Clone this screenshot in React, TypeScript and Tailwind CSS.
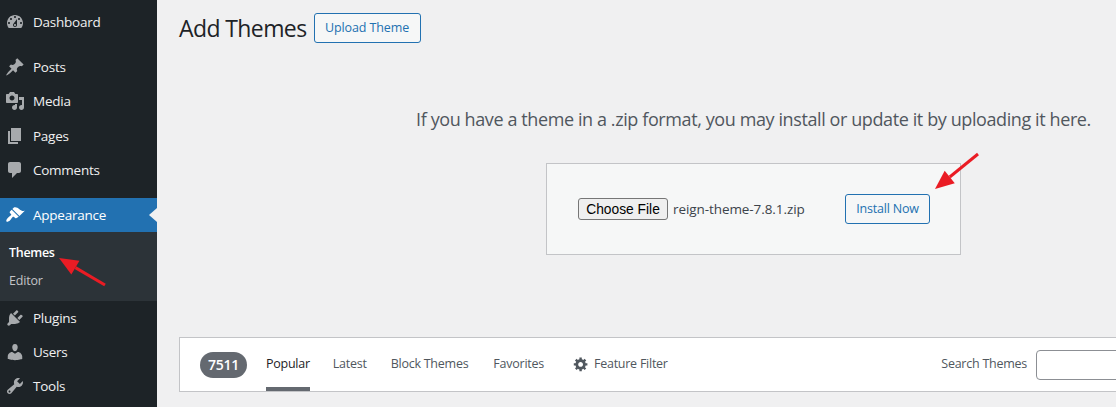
const font = { fontFamily: '"Open Sans", "Noto Sans", sans-serif' };

const P: Record<string, string> = {
  dashboard: "M3.76 16h12.48c1.1-1.37 1.76-3.11 1.76-5 0-4.42-3.58-8-8-8s-8 3.58-8 8c0 1.89.66 3.63 1.76 5zM10 4c.55 0 1 .45 1 1s-.45 1-1 1-1-.45-1-1 .45-1 1-1zM6 6c.55 0 1 .45 1 1s-.45 1-1 1-1-.45-1-1 .45-1 1-1zm8 0c.55 0 1 .45 1 1s-.45 1-1 1-1-.45-1-1 .45-1 1-1zm-5.37 5.55L12 7v6c0 1.1-.9 2-2 2s-2-.9-2-2c0-.57.24-1.08.63-1.45zM4 10c.55 0 1 .45 1 1s-.45 1-1 1-1-.45-1-1 .45-1 1-1zm12 0c.55 0 1 .45 1 1s-.45 1-1 1-1-.45-1-1 .45-1 1-1zm-5 3c0-.55-.45-1-1-1s-1 .45-1 1 .45 1 1 1 1-.45 1-1z",
  posts: "M10.44 3.02l1.82-1.82 6.36 6.35-1.83 1.82c-1.05-.68-2.48-.57-3.41.36l-.75.75c-.92.93-1.04 2.35-.35 3.41l-1.83 1.82-2.41-2.41-2.8 2.79c-.42.42-3.38 2.71-3.8 2.29s1.86-3.39 2.28-3.81l2.79-2.79L4.1 9.36l1.83-1.82c1.05.69 2.48.57 3.4-.36l.75-.75c.93-.92 1.05-2.35.36-3.41z",
  media: "M13 11V4c0-.55-.45-1-1-1h-1.67L9 1H5L3.67 3H2c-.55 0-1 .45-1 1v7c0 .55.45 1 1 1h10c.55 0 1-.45 1-1zM7 4.5c1.38 0 2.5 1.12 2.5 2.5S8.38 9.5 7 9.5 4.5 8.38 4.5 7 5.62 4.5 7 4.5zM14 6h5v10.5c0 1.38-1.12 2.5-2.5 2.5S14 17.88 14 16.5s1.12-2.5 2.5-2.5c.17 0 .34.02.5.05V9h-3V6zm-4 8.05V13h2v3.5c0 1.38-1.12 2.5-2.5 2.5S7 17.88 7 16.5 8.12 14 9.5 14c.17 0 .34.02.5.05z",
  pages: "M6 15V2h10v13H6zm-1 1h8v2H3V5h2v11z",
  comments: "M5 2h9c1.1 0 2 .9 2 2v7c0 1.1-.9 2-2 2h-2l-5 5v-5H5c-1.1 0-2-.9-2-2V4c0-1.1.9-2 2-2z",
  appearance: "M14.48 11.06L7.41 3.99l1.5-1.5c.5-.56 2.3-.47 3.51.32 1.21.8 1.43 1.28 2.91 2.1 1.18.64 2.45 1.26 4.45.85zm-.71.71L6.7 4.7 4.93 6.47c-.39.39-.39 1.02 0 1.41l1.06 1.06c.39.39.39 1.03 0 1.42-.6.6-1.43 1.11-2.21 1.69-.35.26-.7.53-1.01.84-1.34 1.34-1.82 3.01-1.25 3.58.57.57 2.24.09 3.58-1.25.31-.31.58-.66.84-1.01.58-.78 1.09-1.61 1.69-2.21.39-.39 1.03-.39 1.42 0l1.06 1.06c.39.39 1.02.39 1.41 0z",
  plugins: "M13.11 4.36L9.87 7.6 8 5.73l3.24-3.24c.35-.34 1.05-.2 1.56.32.52.51.66 1.21.31 1.55zm-8 1.77l.91-1.12 9.01 9.01-1.19.84c-.71.71-2.63 1.16-3.82 1.16H6.14L4.9 17.26c-.59.59-1.54.59-2.12 0-.59-.58-.59-1.53 0-2.12l1.24-1.24v-3.88c0-1.13.4-3.19 1.09-3.89zm7.26 3.97l3.24-3.24c.34-.35 1.04-.21 1.55.31.52.51.66 1.21.31 1.55l-3.24 3.25z",
  users: "M10 9.25c-2.27 0-2.73-3.44-2.73-3.44C7 4.02 7.82 2 9.97 2c2.16 0 2.98 2.02 2.71 3.81 0 0-.41 3.44-2.68 3.44zm0 2.57L12.72 10c2.39 0 4.52 2.33 4.52 4.53v2.49s-3.65 1.13-7.24 1.13c-3.65 0-7.24-1.13-7.24-1.13v-2.49c0-2.25 1.94-4.48 4.47-4.48z",
  tools: "M16.68 9.77c-1.34 1.34-3.3 1.67-4.95.99l-5.41 6.52c-.99.99-2.59.99-3.58 0s-.99-2.59 0-3.57l6.52-5.42c-.68-1.65-.35-3.61.99-4.95 1.28-1.28 3.12-1.62 4.72-1.06l-2.89 2.89 2.82 2.82 2.86-2.87c.53 1.58.18 3.39-1.08 4.65zM3.81 16.21c.4.39 1.04.39 1.43 0 .4-.4.4-1.04 0-1.43-.39-.4-1.03-.4-1.43 0-.39.39-.39 1.03 0 1.43z",
  gear: "M18 12h-2.18c-.17.7-.44 1.35-.81 1.93l1.54 1.54-2.1 2.1-1.54-1.54c-.58.36-1.23.63-1.91.79V19H8v-2.18c-.68-.16-1.33-.43-1.91-.79l-1.54 1.54-2.12-2.12 1.54-1.54c-.36-.58-.63-1.23-.79-1.91H1V9.03h2.17c.16-.7.44-1.35.8-1.94L2.43 5.55l2.1-2.1 1.54 1.54c.58-.37 1.24-.64 1.93-.81V2h3v2.18c.68.16 1.33.43 1.91.79l1.54-1.54 2.12 2.12-1.54 1.54c.36.59.64 1.24.8 1.94H18V12zm-8.5 1.5c1.66 0 3-1.34 3-3s-1.34-3-3-3-3 1.34-3 3 1.34 3 3 3z",
};

function Icon({ name, className }: { name: string; className: string }) {
  return (
    <svg viewBox="0 0 20 20" className={className} fill="currentColor">
      <path d={P[name]} />
    </svg>
  );
}

function Item({ icon, label, active }: { icon: string; label: string; active?: boolean }) {
  return (
    <div className={`relative flex h-[34px] items-center ${active ? "bg-[#2271b1] text-white" : "text-[#f0f0f1]"}`}>
      <Icon name={icon} className={`ml-[5px] mr-[8px] h-5 w-5 ${active ? "text-white" : "text-[#a7aaad]"}`} />
      <span className="text-[13.5px] tracking-[-0.25px]">{label}</span>
      {active && (
        <div className="absolute right-0 top-[10px] h-0 w-0 border-y-[7px] border-r-[8px] border-y-transparent border-r-[#f0f0f1]" />
      )}
    </div>
  );
}

function Arrow({ x1, y1, x2, y2, className }: { x1: number; y1: number; x2: number; y2: number; className: string }) {
  const a = Math.atan2(y2 - y1, x2 - x1);
  const L = 19;
  const W = 8;
  const bx = x2 - L * Math.cos(a);
  const by = y2 - L * Math.sin(a);
  const px = -Math.sin(a) * W;
  const py = Math.cos(a) * W;
  return (
    <svg className={className} width="1116" height="407" viewBox="0 0 1116 407">
      <line x1={x1} y1={y1} x2={bx} y2={by} stroke="#ea1c24" strokeWidth="3" />
      <polygon points={`${x2},${y2} ${bx + px},${by + py} ${bx - px},${by - py}`} fill="#ea1c24" />
    </svg>
  );
}

export default function App() {
  return (
    <div className="relative flex h-[407px] w-[1116px] overflow-hidden bg-[#f0f0f1]" style={font}>
      <aside className="flex w-[157px] shrink-0 flex-col bg-[#1d2327] pt-[5px]">
        <Item icon="dashboard" label="Dashboard" />
        <div className="mt-[11px]">
          <Item icon="posts" label="Posts" />
          <Item icon="media" label="Media" />
          <div className="mt-px">
            <Item icon="pages" label="Pages" />
          </div>
          <Item icon="comments" label="Comments" />
        </div>
        <div className="mt-[11px]">
          <Item icon="appearance" label="Appearance" active />
        </div>
        <div className="flex h-[69px] flex-col bg-[#2c3338] pl-[9px] pt-[9px] text-[12.5px]">
          <span className="h-[28px] pt-[3px] font-semibold tracking-[-0.3px] text-white">Themes</span>
          <span className="pt-[3px] tracking-[-0.2px] text-[#c3c4c7]">Editor</span>
        </div>
        <Item icon="plugins" label="Plugins" />
        <Item icon="users" label="Users" />
        <Item icon="tools" label="Tools" />
      </aside>

      <main className="pl-[22px]">
        <div className="w-[1149px]">
          <div className="flex items-center gap-[7px] pt-[13px]">
            <h1 className="text-[23px] leading-[30px] tracking-[-0.6px] text-[#1d2327]">Add Themes</h1>
            <button className="h-[30px] w-[107px] rounded-[3px] border border-[#2271b1] bg-[#f6f7f7] text-[12.5px] tracking-[-0.12px] text-[#2271b1]">
              Upload Theme
            </button>
          </div>

          <p className="mt-[62px] text-center text-[18px] leading-[28px] tracking-[-0.4px] text-[#50575e]">
            If you have a theme in a .zip format, you may install or update it by uploading it here.
          </p>

          <div className="mx-auto mt-[30px] flex h-[92px] w-[415px] items-center border border-[#c3c4c7] bg-[#f6f7f7] pl-[31px]">
            <button
              className="h-[22px] w-[90px] rounded-[3px] border border-[#767676] bg-[#efefef] pt-px text-[13.8px] text-black"
              style={{ fontFamily: '"Liberation Sans", Arial, sans-serif' }}
            >
              Choose File
            </button>
            <span className="ml-[5px] w-[172px] text-[13.5px] tracking-[-0.08px] text-[#3c434a]">reign-theme-7.8.1.zip</span>
            <button className="h-[30px] w-[85px] rounded-[3px] border border-[#2271b1] bg-[#f6f7f7] text-[12.5px] tracking-[-0.2px] text-[#2271b1]">
              Install Now
            </button>
          </div>

          <div className="mt-[82px] flex h-[55px] items-center border border-[#c3c4c7] bg-white pl-[20px] pr-[11px] text-[12.5px] tracking-[-0.25px] text-[#50575e]">
            <span className="flex h-[26px] w-[47px] items-center justify-center rounded-full bg-[#646970] text-[14px] font-semibold text-white">
              7511
            </span>
            <div className="relative ml-[19px] flex h-full items-center text-[#1d2327]">
              <span>Popular</span>
              <div className="absolute bottom-0 left-0 right-0 h-1 bg-[#646970]" />
            </div>
            <span className="ml-[23px]">Latest</span>
            <span className="ml-[24px]">Block Themes</span>
            <span className="ml-[25px]">Favorites</span>
            <span className="ml-[29px] flex items-center gap-[5px]">
              <Icon name="gear" className="-mt-[2px] h-4 w-4" />
              Feature Filter
            </span>
            <span className="ml-auto mr-[9px]">Search Themes</span>
            <div className="h-[30px] w-[280px] rounded-[4px] border border-[#8c8f94] bg-white" />
          </div>
        </div>
      </main>

      <Arrow x1={105} y1={285} x2={59} y2={258} className="pointer-events-none absolute left-0 top-0" />
      <Arrow x1={978} y1={154} x2={935} y2={189} className="pointer-events-none absolute left-0 top-0" />
    </div>
  );
}
